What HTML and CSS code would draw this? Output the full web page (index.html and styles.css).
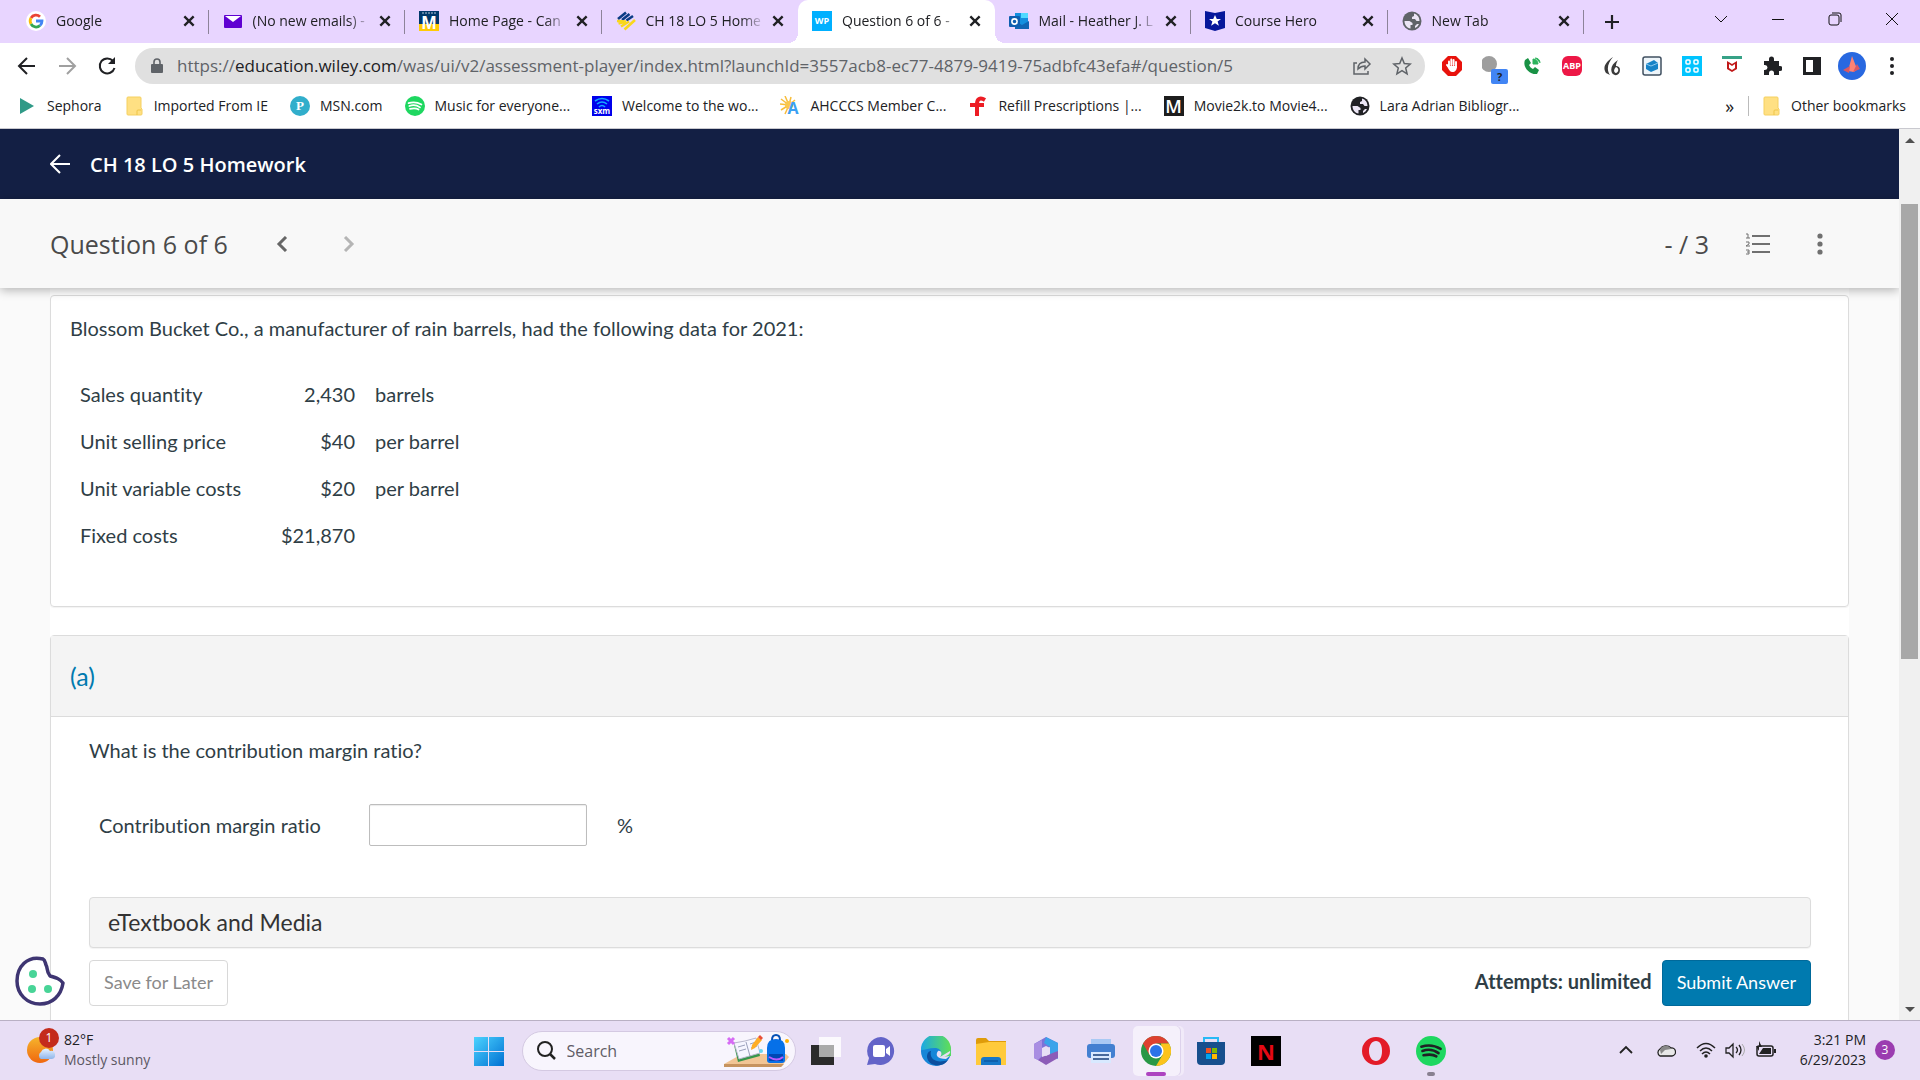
FILE: index.html
```html
<!DOCTYPE html>
<html lang="en">

<head>
    <meta charset="UTF-8">
    <meta name="viewport" content="width=device-width, initial-scale=1.0">
    <title>Question 6 of 6 - CH 18 LO 5 Homework</title>
    <link rel="stylesheet" href="styles.css">
</head>

<body>
    <!-- shared icons -->
    <svg class="defs" aria-hidden="true">
        <symbol id="close" viewBox="0 0 12 12"><path d="M2 2l8 8M10 2l-8 8" stroke="#202124" stroke-width="2" /></symbol>
        <symbol id="globe" viewBox="0 0 20 20">
            <circle cx="10" cy="10" r="9.500" fill="currentColor" />
            <path d="M12 2.500c3.500 1 5.500 4 5.500 7.500h-3l-1.500-2h-3V6l2-1zM2.500 10h5l3 2v2H8.500v3.500C5 17 2.500 14 2.500 10zM13 17v-2l2-2h2c-1 2-2 3.200-4 4z" fill="#ece6f5" />
        </symbol>
        <symbol id="spotify" viewBox="0 0 28 28">
            <circle cx="14" cy="14" r="14" fill="#1ed760" />
            <path d="M5 10c6-2 13-1 18 2M6 14c5-2 11-1 15 2M7 18c5-1 9-1 12 1" fill="none" stroke="currentColor" stroke-width="2.4" stroke-linecap="round" />
        </symbol>
        <symbol id="folder" viewBox="0 0 20 20">
            <path d="M3 2q0-1 1-1h12q1 0 1 1v10l1 1v5q0 1-1 1H4q-1 0-1-1z" fill="#ffe083" stroke="#f5d061" />
            <path d="M13 19v-4q0-1 1-1h3" fill="none" stroke="#eec548" />
        </symbol>
        <symbol id="diamond" viewBox="0 0 20 20">
            <g fill="none" stroke-width="2.600">
                <path d="M2 8l8-6.500M6 9l7.500-6M10.500 9.500L17 5" stroke="#0b3b85" />
                <path d="M1 10l9 .500M2.500 12.500l6-1.500M5 15.500l8-5M8.500 18.500L19 9" stroke="#f9d71c" />
            </g>
        </symbol>
    </svg>

    <header class="browser">
        <div class="tab-strip">
            <nav class="tabs" aria-label="Tabs">
                <div class="tab">
                    <svg class="icon" viewBox="0 0 20 20">
                        <circle cx="10" cy="10" r="10" fill="#fff" />
                        <g fill="none" stroke-width="2.8">
                            <path d="M5 7a5.8 5.8 0 0 1 9-1.200" stroke="#ea4335" />
                            <path d="M5 7a6 6 0 0 0 0 6" stroke="#fbbc05" />
                            <path d="M5 13a5.800 5.800 0 0 0 9 1.500" stroke="#34a853" />
                            <path d="M14 14.500a6 6 0 0 0 2-4.500H10" stroke="#4285f4" />
                        </g>
                    </svg>
                    <span class="tab-title">Google</span>
                    <button class="tab-close" aria-label="Close"><svg><use href="#close" /></svg></button>
                </div>
                <div class="tab">
                    <svg class="icon" viewBox="0 0 20 20"><rect x="1" y="4" width="18" height="13" rx="1" fill="#5f01d1" /><path d="M2 5l8 6 8-6z" fill="#fff" /></svg>
                    <span class="tab-title">(No new emails) -</span>
                    <button class="tab-close" aria-label="Close"><svg><use href="#close" /></svg></button>
                </div>
                <div class="tab">
                    <svg class="icon" viewBox="0 0 20 20">
                        <path d="M0 0h20v13H0z" fill="#00386b" /><path d="M0 13h20v7H0z" fill="#ffcb05" />
                        <path d="M3 2h14" stroke="#b8c8da" stroke-dasharray="2 1" />
                        <text x="10" y="18" text-anchor="middle" class="logo-m">M</text>
                    </svg>
                    <span class="tab-title">Home Page - Can</span>
                    <button class="tab-close" aria-label="Close"><svg><use href="#close" /></svg></button>
                </div>
                <div class="tab">
                    <svg class="icon"><use href="#diamond" /></svg>
                    <span class="tab-title">CH 18 LO 5 Home</span>
                    <button class="tab-close" aria-label="Close"><svg><use href="#close" /></svg></button>
                </div>
                <div class="tab active">
                    <span class="icon wp">WP</span>
                    <span class="tab-title">Question 6 of 6 -</span>
                    <button class="tab-close" aria-label="Close"><svg><use href="#close" /></svg></button>
                </div>
                <div class="tab">
                    <svg class="icon" viewBox="0 0 20 20">
                        <path d="M6 2h13v15H6z" fill="#1490df" /><path d="M12 2h7v5h-7z" fill="#50d9ff" /><path d="M6 10l7 4 7-4v8H6z" fill="#1066b5" />
                        <rect y="5" width="11" height="11" rx="1" fill="#0f5fb0" /><circle cx="5.500" cy="10.500" r="2.600" fill="none" stroke="#fff" stroke-width="1.600" />
                    </svg>
                    <span class="tab-title">Mail - Heather J. L</span>
                    <button class="tab-close" aria-label="Close"><svg><use href="#close" /></svg></button>
                </div>
                <div class="tab">
                    <svg class="icon" viewBox="0 0 20 20"><path d="M0 0l10 2 10-2v17l-10 3-10-3z" fill="#06179b" /><path d="M10 4l1.800 4h4.200l-3.400 2.600 1.300 4.200-3.900-2.600-3.900 2.600 1.300-4.200L4 8h4.200z" fill="#fff" /></svg>
                    <span class="tab-title">Course Hero</span>
                    <button class="tab-close" aria-label="Close"><svg><use href="#close" /></svg></button>
                </div>
                <div class="tab">
                    <svg class="icon grey"><use href="#globe" /></svg>
                    <span class="tab-title">New Tab</span>
                    <button class="tab-close" aria-label="Close"><svg><use href="#close" /></svg></button>
                </div>
            </nav>
            <button class="new-tab" aria-label="New tab"><svg viewBox="0 0 16 16"><path d="M8 1v14M1 8h14" stroke="#202124" stroke-width="2.200" /></svg></button>
            <div class="window-controls">
                <button aria-label="Search tabs"><svg viewBox="0 0 14 14"><path d="M1 4l6 6 6-6" /></svg></button>
                <button aria-label="Minimize"><svg viewBox="0 0 14 14"><path d="M1 7.500h12" /></svg></button>
                <button aria-label="Restore"><svg viewBox="0 0 14 14"><rect x="1" y="3" width="10" height="10" rx="2" /><path d="M4 1h7q2 0 2 2v7" /></svg></button>
                <button aria-label="Close window"><svg viewBox="0 0 14 14"><path d="M1 1l12 12M13 1L1 13" /></svg></button>
            </div>
        </div>

        <div class="toolbar">
            <div class="nav-buttons">
                <button aria-label="Back"><svg viewBox="0 0 20 20"><path d="M18 10H3M10 2l-8 8 8 8" stroke="#202124" /></svg></button>
                <button aria-label="Forward"><svg viewBox="0 0 20 20"><path d="M2 10h15M10 2l8 8-8 8" stroke="#a0a0a0" /></svg></button>
                <button aria-label="Reload"><svg viewBox="0 0 20 20"><path d="M16 5a7.500 7.500 0 1 0 1.500 7" stroke="#202124" /><path d="M18 1v7h-7z" fill="#202124" /></svg></button>
            </div>
            <div class="omnibox">
                <svg class="lock" viewBox="0 0 12 16"><rect y="6" width="12" height="9" rx="1" fill="#5f6368" /><path d="M3 7V4a3 3 0 0 1 6 0v3" fill="none" stroke="#5f6368" stroke-width="1.600" /></svg>
                <a class="url" href="#">https://<b>education.wiley.com</b>/was/ui/v2/assessment-player/index.html?launchId=3557acb8-ec77-4879-9419-75adbfc43efa#/question/5</a>
                <button aria-label="Share"><svg viewBox="0 0 20 20"><path d="M5 7H2v11h14v-3M6 13c0-5 3-7 7-7V3l5 5-5 5v-3c-3 0-5 1-7 3z" /></svg></button>
                <button aria-label="Bookmark"><svg viewBox="0 0 20 20"><path d="M10 2l2.300 5.500 6 .500-4.600 4 1.400 5.800L10 14.700l-5.100 3.100L6.300 12 1.700 8l6-.500z" /></svg></button>
            </div>
            <div class="extensions">
                <button aria-label="AdBlock"><svg viewBox="0 0 20 20"><path d="M6 0h8l6 6v8l-6 6H6l-6-6V6z" fill="#e8120c" /><path d="M7 10V5.500M9.300 9V3.500M11.600 9V4M14 11V6M7 11l-2-2" stroke="#fff" stroke-width="1.900" stroke-linecap="round" /><path d="M6 10h9c0 4-2 6-4.500 6S7 14 5 10z" fill="#fff" /></svg></button>
                <button aria-label="Status"><svg viewBox="0 0 20 20"><circle cx="7" cy="8" r="8" fill="#9e9e9e" /></svg><span class="question">?</span></button>
                <button aria-label="Phone"><svg viewBox="0 0 20 20"><path d="M3 4l3-2 3 5-2 2c1 2 2 3 4 4l2-2 4 3-2 4c-7 1-15-7-12-14z" fill="#199245" /><path d="M11 3v5h5a5 5 0 0 0-5-5M13 2c3 0 5 2 5 5" fill="#2cb35c" stroke="#2cb35c" /></svg></button>
                <button aria-label="Adblock Plus"><span class="abp">ABP</span></button>
                <button aria-label="Flame"><svg viewBox="0 0 20 20"><path d="M11 1C4 6 0 11 4 17l4 2C4 13 6 7 11 1zM16 4c-6 4-8 8-6 13 3 4 8 2 8-3 0-3-2-4-4-4 0-3 1-4 2-6zM14 11c3 1 3 5 0 6-3-1-2-4 0-6z" fill="#3b3b3b" fill-rule="evenodd" /></svg></button>
                <button aria-label="Cube"><svg viewBox="0 0 20 20"><rect x="1" y="1" width="18" height="18" rx="2" fill="#eef5fa" stroke="#405060" stroke-width="1.500" /><path d="M4 8l8-4 4 3v6l-7 3-5-3z" fill="#1683c7" /><path d="M4 8l5 2 7-3" stroke="#8cc9ee" fill="none" /></svg></button>
                <button aria-label="Grid"><svg viewBox="0 0 20 20"><path d="M0 0h20v20H0z" fill="#00c4ff" /><g fill="none" stroke="#fff" stroke-width="1.500"><rect x="4" y="4" width="4" height="4" rx="1" /><rect x="12" y="4" width="4" height="4" rx="1" /><rect x="4" y="12" width="4" height="4" rx="1" /><rect x="12" y="12" width="4" height="4" rx="1" /></g></svg></button>
                <button aria-label="McAfee"><svg viewBox="0 0 20 20"><path d="M0 0h20v3H0z" fill="#37a287" /><path d="M5 5l5 3 5-3v8l-5 3-5-3z" fill="#c01818" /><path d="M7 8l3 2 3-2v4l-3 2-3-2z" fill="#fff" /></svg></button>
                <button aria-label="Extensions"><svg viewBox="0 0 20 20"><path d="M2 5h5V3a2.500 2.500 0 0 1 5 0v2h5v5h1a2 2 0 0 1 0 5h-1v4h-5v-2a2 2 0 0 0-5 0v2H2v-5h1a2 2 0 0 0 0-5H2z" fill="#202124" /></svg></button>
                <button aria-label="Side panel"><svg viewBox="0 0 20 20"><path d="M1 1h18v18H1zM4 4v12h7V4z" fill="#202124" fill-rule="evenodd" /></svg></button>
                <button aria-label="Profile"><svg class="avatar" viewBox="0 0 28 28"><circle cx="14" cy="14" r="14" fill="#2868e0" /><path d="M14 4l5 13-3 3-6-1z" fill="#ff8272" /><path d="M5 18l7-4-1 7zM15 20l7-3-3-5z" fill="#d85864" /></svg></button>
                <button aria-label="Menu"><svg viewBox="0 0 20 20"><g fill="#202124"><circle cx="10" cy="3" r="2" /><circle cx="10" cy="10" r="2" /><circle cx="10" cy="17" r="2" /></g></svg></button>
            </div>
        </div>

        <nav class="bookmarks" aria-label="Bookmarks">
            <a href="#"><svg class="icon" viewBox="0 0 20 20"><path d="M3 2l14 8-14 8z" fill="#2f9a87" /></svg>Sephora</a>
            <a href="#"><svg class="icon"><use href="#folder" /></svg>Imported From IE</a>
            <a href="#"><span class="icon pandora">P</span>MSN.com</a>
            <a href="#"><svg class="icon white"><use href="#spotify" /></svg>Music for everyone...</a>
            <a href="#"><svg class="icon" viewBox="0 0 20 20"><path d="M0 0h20v20H0z" fill="#0000eb" /><path d="M3 5q7-5 14 0M5 8q5-4 10 0M7 11q3-3 6 0" fill="none" stroke="#15a8ff" stroke-width="1.600" /><text x="10" y="18" text-anchor="middle" class="logo-sxm">sxm</text></svg>Welcome to the wo...</a>
            <a href="#"><svg class="icon" viewBox="0 0 20 20"><path d="M9 9L5 0M9 9L1 3M9 9L0 8M9 9L1 14M9 9L5 18M9 9l2-8M9 9l6-5" stroke="#f7bd3b" stroke-width="1.500" /><circle cx="9" cy="9" r="4" fill="#f9c74f" /><text x="13" y="18" text-anchor="middle" class="logo-a">A</text></svg>AHCCCS Member C...</a>
            <a href="#"><svg class="icon" viewBox="0 0 20 20"><path d="M17 4c-5-3-8-1-8 4v12M2 9h14" fill="none" stroke="#ed1c24" stroke-width="4" /></svg>Refill Prescriptions |...</a>
            <a href="#"><span class="icon movie">M</span>Movie2k.to Movie4...</a>
            <a href="#"><svg class="icon black"><use href="#globe" /></svg>Lara Adrian Bibliogr...</a>
            <button class="more" aria-label="More bookmarks">»</button>
            <a class="other" href="#"><svg class="icon"><use href="#folder" /></svg>Other bookmarks</a>
        </nav>
    </header>

    <div class="page">
        <main class="content">
            <div class="title-bar">
                <button aria-label="Back to assignment"><svg viewBox="0 0 20 20"><path d="M20 10H2M10 1l-9 9 9 9" fill="none" stroke="#fff" stroke-width="2" /></svg></button>
                <h1>CH 18 LO 5 Homework</h1>
            </div>

            <div class="question-bar">
                <h2>Question 6 of 6</h2>
                <button aria-label="Previous question"><svg viewBox="0 0 16 16"><path d="M11 1L4 8l7 7" stroke="#666" /></svg></button>
                <button aria-label="Next question"><svg viewBox="0 0 16 16"><path d="M5 1l7 7-7 7" stroke="#b5b5b5" /></svg></button>
                <span class="score">- / 3</span>
                <button class="list" aria-label="Question list">
                    <svg viewBox="0 0 26 22"><path d="M7 3h18M7 11h18M7 19h18" stroke="#707070" stroke-width="2" /><path d="M1 1h2v4M1 5h4M1 9h3v2l-3 2h4M1 17h3v4H1M2 19h2" stroke="#707070" stroke-width="1" /></svg>
                </button>
                <button class="dots" aria-label="More options"><svg viewBox="0 0 22 22"><g fill="#707070"><circle cx="11" cy="3" r="2.600" /><circle cx="11" cy="11" r="2.600" /><circle cx="11" cy="19" r="2.600" /></g></svg></button>
            </div>

            <div class="sheet">
                <section class="card stem">
                    <p>Blossom Bucket Co., a manufacturer of rain barrels, had the following data for 2021:</p>
                    <table>
                        <tr><td>Sales quantity</td><td class="num">2,430</td><td>barrels</td></tr>
                        <tr><td>Unit selling price</td><td class="num">$40</td><td>per barrel</td></tr>
                        <tr><td>Unit variable costs</td><td class="num">$20</td><td>per barrel</td></tr>
                        <tr><td>Fixed costs</td><td class="num">$21,870</td><td></td></tr>
                    </table>
                </section>

                <section class="card part">
                    <h3>(a)</h3>
                    <form class="part-body">
                        <p>What is the contribution margin ratio?</p>
                        <div class="answer-row">
                            <label for="ratio">Contribution margin ratio</label>
                            <input type="text" id="ratio">
                            <span>%</span>
                        </div>
                        <button type="button" class="etextbook">eTextbook and Media</button>
                        <div class="actions">
                            <button type="button" class="save">Save for Later</button>
                            <span class="attempts">Attempts: unlimited</span>
                            <button type="submit" class="submit">Submit Answer</button>
                        </div>
                    </form>
                </section>
            </div>

            <button class="cookie" aria-label="Cookie settings">
                <svg viewBox="0 0 50 50"><path d="M28 3C12-1 2 11 2 25c0 13 10 23 23 23 12 0 21-8 23-21-3-4-6-5-13-7-4-5-2-8-4-11-1-3-1-5-3-6z" fill="#fff" stroke="#3e3572" stroke-width="3.500" stroke-linejoin="round" /><g fill="#48d497"><circle cx="18" cy="18" r="4" /><circle cx="17" cy="33" r="4" /><circle cx="33" cy="33" r="4" /></g></svg>
            </button>
        </main>
        <div class="scrollbar">
            <svg viewBox="0 0 10 6"><path d="M5 0l5 5H0z" fill="#505050" /></svg>
            <div class="thumb"></div>
            <svg viewBox="0 0 10 6"><path d="M0 0h10L5 5z" fill="#505050" /></svg>
        </div>
    </div>

    <footer class="taskbar">
        <button class="weather">
            <svg viewBox="0 0 28 28">
                <defs>
                    <linearGradient id="sun" x2="0" y2="1"><stop stop-color="#f5b52c" /><stop offset="1" stop-color="#f0670f" /></linearGradient>
                    <linearGradient id="cloud" x2="0" y2="1"><stop stop-color="#e6f2ff" /><stop offset="1" stop-color="#8fb5ea" /></linearGradient>
                </defs>
                <circle cx="13" cy="14" r="13" fill="url(#sun)" />
                <path d="M14 23a4 4 0 0 1 0-7 5 5 0 0 1 9-1 4 4 0 0 1 2 8z" fill="url(#cloud)" />
            </svg>
            <span class="badge">1</span>
            <span class="weather-text"><span>82°F</span><small>Mostly sunny</small></span>
        </button>

        <div class="apps">
            <button aria-label="Start">
                <svg viewBox="0 0 30 30"><defs><linearGradient id="win" x2="1" y2="1"><stop stop-color="#4cd3ff" /><stop offset="1" stop-color="#0070d2" /></linearGradient></defs><path d="M0 1h14v14H0zM15 1h15v14H15zM0 16h14v14H0zM15 16h15v14H15z" fill="url(#win)" /></svg>
            </button>
            <label class="search">
                <svg viewBox="0 0 20 20"><circle cx="9" cy="8" r="7" fill="none" stroke="#222" stroke-width="2" /><path d="M14 13l5 5" stroke="#222" stroke-width="2.500" /></svg>
                <input type="text" placeholder="Search">
                <svg class="art" viewBox="0 0 66 34">
                    <path d="M0 30l18-10h44l3 3-8 10H0z" fill="#f1c595" /><path d="M0 30h60l-3 3H0z" fill="#c6935f" />
                    <path d="M10 11l22-5 4 16-22 6z" fill="#36964b" /><path d="M10 9l11-2 11-3 4 15-21 6z" fill="#f6f6ff" stroke="#b8b8cc" /><path d="M22 8l4 14M14 13l7-2M15 17l7-2M26 10l6-2M27 14l6-2" stroke="#999fba" />
                    <path d="M27 16l1-5 6-8 4 3-7 8z" fill="#ffad26" /><path d="M34 3l2-2 3 3-2 2z" fill="#e84f37" />
                    <path d="M43 14q0-9 9-9t9 9v12q0 3-3 3H46q-3 0-3-3z" fill="#0670e8" /><path d="M48 6q0-5 4-5t4 5" fill="none" stroke="#0650b5" stroke-width="2" /><path d="M45 20h14v7H45z" fill="#0047b4" /><path d="M45 23q8 5 14 0" fill="none" stroke="#b95cff" stroke-width="2" />
                    <path d="M4 4l6 6M10 4l-6 6" stroke="#d66cf4" stroke-width="3" /><circle cx="63" cy="7" r="2" fill="#ffb000" /><circle cx="37" cy="17" r="2" fill="#66d5ee" />
                </svg>
            </label>
            <button aria-label="Task view"><svg viewBox="0 0 30 30"><path d="M0 9h23v20H0z" fill="#2b2b2b" /><path d="M8 1h22v20H8z" fill="#fff" fill-opacity=".8" /><path d="M8 9h15v12H8z" fill="#aaa" /></svg></button>
            <button aria-label="Chat"><svg viewBox="0 0 30 30"><path d="M15 1a14 14 0 1 1-6 27l-8 1 2-7A14 14 0 0 1 15 1z" fill="#6364c8" /><rect x="7" y="9" width="12" height="12" rx="2" fill="#fff" /><path d="M20 13l4-3v10l-4-3z" fill="#fff" /></svg></button>
            <button aria-label="Edge"><svg viewBox="0 0 30 30"><defs><linearGradient id="edge"><stop stop-color="#1ca8e4" /><stop offset="1" stop-color="#60df55" /></linearGradient></defs><circle cx="15" cy="15" r="15" fill="#1686d8" /><path d="M0 14A15 15 0 0 1 30 13c0 6-4 8-11 8 3-5 0-9-5-9-6 0-10 2-14 2z" fill="url(#edge)" /><path d="M10 15c-2 8 5 13 17 9-6 9-20 6-21-3 0-4 2-6 4-6z" fill="#0c4f9f" /><path d="M19 21c3-3 1-7-2-6-3 4-1 8 8 8l5-4-1-4z" fill="#e8def5" /><path d="M19 21c7 0 11-3 11-8v7z" fill="#54da62" /></svg></button>
            <button aria-label="File Explorer"><svg viewBox="0 0 30 30"><path d="M0 4q0-2 2-2h8l3 3h17v8H0z" fill="#df9c0a" /><path d="M0 8l13-2h17v23H0z" fill="#ffca3b" /><path d="M5 29v-5q0-3 3-3h14q3 0 3 3v5z" fill="#1677c8" /><path d="M8 25h14" stroke="#064b91" /></svg></button>
            <button aria-label="Microsoft 365"><svg viewBox="0 0 30 30"><path d="M15 1l12 6v9l-8-5-8 4v11L3 22V8z" fill="#7d72d8" /><path d="M15 1l12 6v16l-8-5v-7l-6-4z" fill="#3ba3ea" /><path d="M27 22l-12 7-8-5 4-3 8-3 8-3z" fill="#8c5cb8" /><path d="M3 8l8-4v16l-4 4-4-2z" fill="#a98ee2" /><path d="M11 12l4-2 4 2v6l-4 2-4-2z" fill="#e8def5" /></svg></button>
            <button aria-label="Printer"><svg viewBox="0 0 30 30"><path d="M5 3h20v8H5z" fill="#a9c9f4" /><rect x="1" y="8" width="28" height="14" rx="3" fill="#4380d1" /><path d="M5 16h20v11H5z" fill="#d8e9ff" /><path d="M7 19h16M7 23h16" stroke="#173f7b" stroke-width="1.500" /></svg></button>
            <button class="running" aria-label="Chrome"><svg viewBox="0 0 30 30"><circle cx="15" cy="15" r="15" fill="#299846" /><path d="M2 7.500a15 15 0 0 1 26 0H15L8.500 19z" fill="#dd4130" /><path d="M28 7.500A15 15 0 0 1 15 30l6.500-11L20 7.500z" fill="#fcc31c" /><circle cx="15" cy="15" r="7.500" fill="#fff" /><circle cx="15" cy="15" r="6" fill="#2a73e8" /></svg></button>
            <button aria-label="Store"><svg viewBox="0 0 30 30"><path d="M8 7V2h14v5" fill="none" stroke="#27b9f5" stroke-width="2" /><path d="M1 6h28v19q0 4-4 4H5q-4 0-4-4z" fill="#174f8d" /><path d="M10 12h5v5h-5z" fill="#f25022" /><path d="M16 12h5v5h-5z" fill="#7fba00" /><path d="M10 18h5v5h-5z" fill="#00a4ef" /><path d="M16 18h5v5h-5z" fill="#ffb900" /></svg></button>
            <button aria-label="Netflix"><span class="netflix">N</span></button>
            <span class="gap"></span>
            <button aria-label="Opera"><svg viewBox="0 0 30 30"><path d="M15 1a14 14 0 1 0 0 28 14 14 0 1 0 0-28zM15 5c4 0 6 4 6 10s-2 10-6 10-7-4-7-10 3-10 7-10z" fill="#e31b28" fill-rule="evenodd" /></svg></button>
            <button class="background" aria-label="Spotify"><svg><use href="#spotify" /></svg></button>
        </div>

        <div class="tray">
            <svg viewBox="0 0 20 20"><path d="M4 13l6-6 6 6" fill="none" stroke="#222" stroke-width="1.800" /></svg>
            <svg class="onedrive" viewBox="0 0 20 20"><path d="M4 16a4 4 0 0 1 0-7 7 7 0 0 1 11-1 4 4 0 0 1 1 8z" fill="#e8e8e8" stroke="#222" stroke-width="1.300" /><path d="M4 10a6 6 0 0 1 11-1l-6 1-4 4z" fill="#888" /></svg>
            <svg class="wifi" viewBox="0 0 20 20"><path d="M1 8q9-9 18 0M4 11q6-6 12 0M6 14q4-4 8 0" fill="none" stroke="#222" stroke-width="1.500" /><circle cx="10" cy="16" r="1.800" fill="#222" /></svg>
            <svg viewBox="0 0 20 20"><path d="M1 8h3l4-4v13l-4-4H1zM11 7q3 3 0 6M14 5q4 5 0 10" fill="none" stroke="#222" stroke-width="1.300" /><path d="M17 4q5 6 0 12" fill="none" stroke="#aaa" /></svg>
            <svg class="battery" viewBox="0 0 20 20"><rect x="1" y="6" width="16" height="10" rx="2" fill="#e8def5" stroke="#222" stroke-width="1.500" /><path d="M7 8h8v6H3zM18 9h2v4h-2zM3 1v5H0l3 5V7h3z" fill="#222" /></svg>
            <time>3:21 PM<br>6/29/2023</time>
            <span class="notify">3</span>
        </div>
    </footer>
</body>

</html>
```
FILE: styles.css
```css
* {
    box-sizing: border-box;
}

body {
    display: flex;
    flex-direction: column;
    height: 100vh;
    margin: 0;
    overflow: hidden;
    font-family: "Open Sans", "Noto Sans", sans-serif;
    font-size: 14px;
    color: #202124;
    background-color: #fff;
}

button {
    padding: 0;
    border: none;
    background: none;
    font: inherit;
    color: inherit;
    cursor: pointer;
}

a {
    color: inherit;
    text-decoration: none;
}

svg {
    display: block;
    flex: none;
}

.defs {
    position: absolute;
    width: 0;
    height: 0;
}

.icon {
    flex: none;
    width: 20px;
    height: 20px;
}

/* tabs */
.tab-strip {
    display: flex;
    height: 43px;
    padding-left: 12px;
    background-color: #e8d5ff;
}

.tabs {
    display: flex;
    flex: 1;
    min-width: 0;
}

.tab {
    display: flex;
    flex: 1;
    align-items: center;
    min-width: 0;
    padding: 0 13px 2px 14px;
    background: linear-gradient(#8d8399, #8d8399) no-repeat right center / 1px 24px;
}

.tab.active {
    position: relative;
    background: #fff;
    border-radius: 10px 10px 0 0;
}

.tab.active::before,
.tab.active::after {
    content: "";
    position: absolute;
    bottom: 0;
    left: -10px;
    width: 10px;
    height: 10px;
    background: radial-gradient(circle at 0 0, #e8d5ff 10px, #fff 10px);
}

.tab.active::after {
    left: auto;
    right: -10px;
    background: radial-gradient(circle at 100% 0, #e8d5ff 10px, #fff 10px);
}

/* no divider next to the open tab */
.tab:has(+ .active) {
    background: none;
}

.tab-title {
    flex: 1;
    margin: 0 6px 0 10px;
    overflow: hidden;
    white-space: nowrap;
    mask-image: linear-gradient(to right, #000 80%, transparent);
}

.tab-close svg {
    width: 14px;
    height: 14px;
}

.new-tab {
    width: 56px;
}

.new-tab svg {
    width: 16px;
    height: 16px;
    margin: auto;
}

.window-controls {
    display: flex;
    margin-left: 52px;
    height: 37px;
}

.window-controls button {
    width: 57px;
}

.window-controls svg {
    width: 14px;
    height: 14px;
    margin: auto;
    fill: none;
    stroke: #111;
}

.wp {
    background-color: #00b0ff;
    color: #fff;
    font-size: 9px;
    font-weight: bold;
    line-height: 20px;
    text-align: center;
}

.logo-m {
    fill: #fff;
    font: bold 18px "Liberation Sans", sans-serif;
}

.logo-sxm {
    fill: #fff;
    font: bold 8px "Open Sans", sans-serif;
}

.logo-a {
    fill: #3aa0f3;
    font: bold 16px "Open Sans", sans-serif;
}

.grey {
    color: #5f6368;
}

.black {
    color: #202124;
}

.white {
    color: #fff;
}

/* toolbar */
.toolbar {
    display: flex;
    align-items: center;
    height: 45px;
    padding-left: 7px;
}

.nav-buttons {
    display: flex;
    width: 128px;
}

.nav-buttons button {
    width: 40px;
}

.nav-buttons svg {
    width: 20px;
    height: 20px;
    margin: auto;
    fill: none;
    stroke-width: 2;
}

.omnibox {
    display: flex;
    flex: 1;
    align-items: center;
    min-width: 0;
    height: 36px;
    padding: 0 13px 0 16px;
    border-radius: 18px;
    background-color: #e0e0e0;
}

.lock {
    width: 12px;
    height: 16px;
}

.url {
    flex: 1;
    margin-left: 14px;
    overflow: hidden;
    white-space: nowrap;
    font-size: 17px;
    color: #5f6368;
}

.url b {
    font-weight: normal;
    color: #202124;
}

.omnibox button {
    margin-left: 20px;
}

.omnibox button svg {
    width: 20px;
    height: 20px;
    fill: none;
    stroke: #5f6368;
    stroke-width: 1.5;
}

.extensions {
    display: flex;
    align-items: center;
    padding: 0 8px 0 7px;
}

.extensions button {
    position: relative;
    width: 40px;
}

.extensions svg {
    width: 20px;
    height: 20px;
    margin: auto;
}

.extensions .avatar {
    width: 28px;
    height: 28px;
}

.question {
    position: absolute;
    right: 4px;
    bottom: -8px;
    width: 17px;
    height: 15px;
    border-radius: 2px;
    background-color: #4285f4;
    font-size: 11px;
    font-weight: bold;
    line-height: 15px;
}

.abp {
    display: block;
    width: 20px;
    height: 20px;
    margin: auto;
    border-radius: 6px;
    background-color: #ed1846;
    color: #fff;
    font-size: 9px;
    font-weight: bold;
    line-height: 20px;
}

/* bookmarks */
.bookmarks {
    display: flex;
    align-items: center;
    gap: 22px;
    height: 41px;
    padding: 0 14px 5px 17px;
    border-bottom: 1px solid #c9c9cf;
    white-space: nowrap;
}

.bookmarks a {
    display: flex;
    align-items: center;
    gap: 10px;
}

.bookmarks .more {
    margin-left: auto;
    font-size: 18px;
}

.bookmarks .other {
    margin-left: -8px;
    padding-left: 12px;
    border-left: 1px solid #bbb;
}

.pandora {
    border-radius: 50%;
    background-color: #31aecb;
    color: #fff;
    font: bold 13px/20px "Liberation Serif", serif;
    text-align: center;
}

.movie {
    background-color: #1d1d1d;
    color: #fff;
    font-size: 18px;
    font-weight: 600;
    line-height: 20px;
    text-align: center;
}

/* page */
.page {
    display: flex;
    flex: 1;
    min-height: 0;
    font-family: Lato, sans-serif;
    font-size: 20px;
    font-variant-ligatures: none;
    color: #2f3e46;
}

.content {
    position: relative;
    flex: 1;
    overflow: hidden;
    background-color: #fafafa;
}

.title-bar {
    display: flex;
    align-items: center;
    gap: 20px;
    height: 70px;
    padding: 0 50px;
    background-color: #131f44;
    color: #fff;
}

.title-bar svg {
    width: 20px;
    height: 20px;
}

h1 {
    margin: 0;
    font: 600 20px "Open Sans", sans-serif;
}

.question-bar {
    position: relative;
    display: flex;
    align-items: center;
    height: 89px;
    padding: 0 56px 0 50px;
    background-color: #f8f8f8;
    box-shadow: 0 2px 10px rgba(0, 0, 0, 0.3);
    font-family: "Open Sans", sans-serif;
    font-size: 25px;
    color: #4a4a4a;
}

.question-bar h2 {
    margin: 0 32px 0 0;
    font-size: 25px;
    font-weight: normal;
}

.question-bar button {
    width: 46px;
    margin-right: 19px;
}

.question-bar svg {
    width: 16px;
    height: 16px;
    margin: auto;
    fill: none;
    stroke-width: 3;
}

.score {
    margin-left: auto;
}

.question-bar .list {
    margin: 0 16px 0 26px;
}

.question-bar .list svg {
    width: 26px;
    height: 22px;
}

.question-bar .dots {
    margin: 0;
}

.question-bar .dots svg {
    width: 22px;
    height: 22px;
}

.sheet {
    margin: 0 50px;
    padding-top: 7px;
    background-color: #fff;
}

.card {
    border: 1px solid #dcdcdc;
    border-radius: 4px;
    box-shadow: 0 1px 1px rgba(0, 0, 0, 0.05);
}

.card p {
    margin: 0;
    line-height: 28px;
}

.stem {
    padding: 18px 19px 48px;
    margin-bottom: 28px;
}

.stem table {
    margin-top: 28px;
    border-spacing: 0;
}

.stem td {
    height: 47px;
    padding: 0 10px;
}

.stem .num {
    width: 114px;
    text-align: right;
}

.part h3 {
    margin: 0;
    padding: 0 19px;
    border-bottom: 1px solid #dcdcdc;
    background-color: #f4f4f4;
    font-size: 25px;
    font-weight: normal;
    line-height: 80px;
    color: #007aaf;
}

.part-body {
    padding: 19px 37px 60px 38px;
}

.answer-row {
    display: flex;
    align-items: center;
    margin: 40px 0 51px;
    padding-left: 10px;
}

.answer-row label {
    width: 270px;
}

.answer-row input {
    width: 218px;
    height: 42px;
    margin-right: 30px;
    padding: 0 10px;
    border: 1px solid #bdbdbd;
    border-radius: 2px;
    box-shadow: inset 0 1px 1px rgba(0, 0, 0, 0.08);
    font: inherit;
}

.etextbook {
    display: block;
    width: 100%;
    height: 51px;
    padding: 0 18px 2px;
    border: 1px solid #dcdcdc;
    border-radius: 4px;
    background-color: #f4f4f4;
    box-shadow: 0 1px 1px rgba(0, 0, 0, 0.05);
    font-size: 23px;
    text-align: left;
    color: #333;
}

.actions {
    display: flex;
    align-items: center;
    gap: 10px;
    margin-top: 12px;
}

.save,
.submit {
    height: 46px;
    padding: 0 14px 2px;
    border: 1px solid #d8d8d8;
    border-radius: 4px;
    font-size: 18px;
    color: #8a8a8a;
}

.submit {
    border-color: #00699a;
    background-color: #007aaf;
    color: #fff;
}

.attempts {
    margin-left: auto;
    padding-bottom: 4px;
    font-weight: bold;
}

.cookie {
    position: absolute;
    left: 15px;
    bottom: 14px;
}

.cookie svg {
    width: 50px;
    height: 50px;
}

.scrollbar {
    display: flex;
    flex-direction: column;
    justify-content: space-between;
    align-items: center;
    width: 21px;
    padding: 9px 2px 7px;
    background-color: #f0f0f0;
}

.scrollbar svg {
    width: 10px;
    height: 6px;
}

.thumb {
    width: 17px;
    height: 52%;
    margin-bottom: 288px;
    background-color: #a8a8a8;
}

/* taskbar */
.taskbar {
    display: grid;
    grid-template-columns: 1fr auto 1fr;
    align-items: center;
    height: 60px;
    border-top: 1px solid #b9b0c4;
    background-color: #e8def5;
}

.weather {
    position: relative;
    display: flex;
    align-items: center;
    justify-self: start;
    gap: 9px;
    padding: 0 0 2px 27px;
    text-align: left;
}

.weather svg {
    width: 28px;
    height: 28px;
}

.badge {
    position: absolute;
    left: 39px;
    top: -2px;
    width: 20px;
    height: 20px;
    border-radius: 50%;
    background-color: #c42b1c;
    color: #fff;
    font-size: 12px;
    line-height: 20px;
    text-align: center;
}

.weather-text {
    display: flex;
    flex-direction: column;
    line-height: 20px;
}

.weather-text small {
    font-size: 14px;
    color: #5c5863;
}

.apps {
    display: flex;
    align-items: center;
}

.apps button,
.gap {
    width: 55px;
    height: 50px;
}

.apps button svg {
    width: 30px;
    height: 30px;
    margin: auto;
}

.search {
    display: flex;
    align-items: center;
    width: 274px;
    height: 40px;
    margin: 0 3px 0 5px;
    padding: 0 5px 0 13px;
    border: 1px solid #d4c9e2;
    border-radius: 20px;
    background-color: #f8f5fd;
}

.search svg {
    width: 20px;
    height: 20px;
}

.search input {
    flex: 1;
    min-width: 0;
    padding: 0 11px;
    border: none;
    background: none;
    font: inherit;
    font-size: 16px;
}

.search input::placeholder {
    color: #605c66;
}

.search .art {
    width: 66px;
    height: 34px;
}

.netflix {
    display: block;
    width: 30px;
    height: 30px;
    margin: auto;
    background-color: #000;
    color: #e50914;
    font-size: 22px;
    font-weight: bold;
    line-height: 30px;
}

.apps .running,
.apps .background {
    position: relative;
}

.apps .running {
    width: 47px;
    margin: 0 4px;
    border-radius: 5px;
    background-color: #f5f0fb;
    box-shadow: 1px 0 0 #ddd2ec, 4px 0 0 #f1eaf9;
}

.running::after,
.background::after {
    content: "";
    position: absolute;
    left: 50%;
    bottom: 0;
    width: 20px;
    height: 4px;
    margin-left: -10px;
    border-radius: 2px;
    background-color: #ad43c0;
}

.background::after {
    width: 8px;
    margin-left: -4px;
    background-color: #888090;
}

.tray {
    display: flex;
    align-items: center;
    justify-self: end;
    gap: 9px;
    padding: 0 25px 2px 0;
}

.tray svg {
    width: 20px;
    height: 20px;
}

.tray .onedrive {
    margin: 0 11px;
}

.tray .battery {
    margin: 0 15px 0 2px;
}

.tray time {
    line-height: 20px;
    text-align: right;
}

.notify {
    width: 20px;
    height: 20px;
    border-radius: 50%;
    background-color: #9b3cb0;
    color: #fff;
    font-size: 12px;
    line-height: 20px;
    text-align: center;
}
```
